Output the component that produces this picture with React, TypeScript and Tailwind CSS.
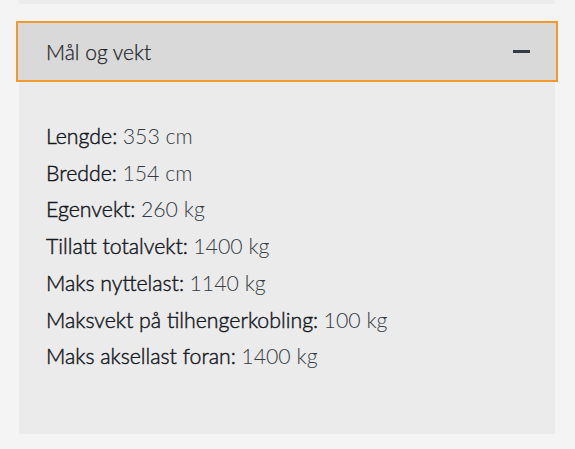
import React from "react";

const rows: [string, string][] = [
  ["Lengde:", "353 cm"],
  ["Bredde:", "154 cm"],
  ["Egenvekt:", "260 kg"],
  ["Tillatt totalvekt:", "1400 kg"],
  ["Maks nyttelast:", "1140 kg"],
  ["Maksvekt på tilhengerkobling:", "100 kg"],
  ["Maks aksellast foran:", "1400 kg"],
];

export default function App() {
  return (
    <div
      className="w-[575px] h-[449px] bg-[#f4f4f4] overflow-hidden text-[#22272d]"
      style={{ fontFamily: "Lato, 'Open Sans', sans-serif" }}
    >
      <div className="mx-[19px] w-[536px] h-[4px] bg-[#ececec]" />
      <div className="mt-[17px] ml-[16px] w-[542px] h-[61px] border-2 border-[#f29a2c] bg-[#d9d9d9] flex items-center justify-between pl-[28px] pr-[26px]">
        <span className="text-[21px] leading-none font-light text-[#1f242a] [-webkit-text-stroke:0.25px_#1f242a]">Mål og vekt</span>
        <span className="block w-[17px] h-[3px] bg-[#333b44]" />
      </div>
      <div className="ml-[19px] w-[536px] h-[352px] bg-[#ebebeb] pt-[36px] pl-[27px]">
        {rows.map(([k, v]) => (
          <div key={k} className="text-[21.3px] leading-[36.7px] whitespace-nowrap">
            <span className="font-light text-[#15191e] [-webkit-text-stroke:0.45px_#15191e]">{k}</span>{" "}
            <span className="font-light text-[#353b42]">{v}</span>
          </div>
        ))}
      </div>
    </div>
  );
}
